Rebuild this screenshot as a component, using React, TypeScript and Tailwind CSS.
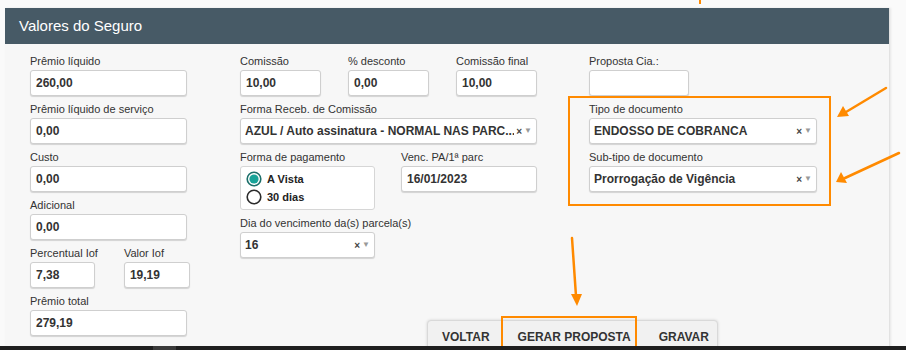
const font = { fontFamily: '"Liberation Sans", Arial, sans-serif' };

const Label = ({ children }: { children: React.ReactNode }) => (
  <div className="h-[14px] mb-[2px] text-[11px] leading-[14px] text-[#333] whitespace-nowrap">{children}</div>
);

const Input = ({ value, width }: { value?: string; width: string }) => (
  <div
    className={`${width} h-[26px] bg-white border border-[#cfcfcf] rounded-[3px] shadow-[0_1px_1px_rgba(0,0,0,0.15)] px-[5px] flex items-center text-[12px] font-bold text-[#333]`}
  >
    {value}
  </div>
);

const Select = ({ value, width }: { value: string; width: string }) => (
  <div
    className={`${width} h-[26px] bg-white border border-[#cfcfcf] rounded-[3px] shadow-[0_1px_1px_rgba(0,0,0,0.15)] pl-[4px] pr-[4px] flex items-center text-[12px] font-bold text-[#333]`}
  >
    <span className="flex-1 whitespace-nowrap overflow-hidden">{value}</span>
    <span className="text-[10px] font-bold text-[#444] ml-[2px]">×</span>
    <span className="text-[8px] text-[#999] ml-[2px]">▼</span>
  </div>
);

const Field = ({ label, children }: { label: string; children: React.ReactNode }) => (
  <div className="flex flex-col">
    <Label>{label}</Label>
    {children}
  </div>
);

const Radio = ({ checked, label }: { checked?: boolean; label: string }) => (
  <div className="flex items-center gap-[5px] h-[18px]">
    <svg width="16" height="16" viewBox="0 0 16 16">
      <circle cx="8" cy="8" r="6.8" fill="white" stroke={checked ? "#1c6f6a" : "#2b2b2b"} strokeWidth="1.6" />
      {checked && <circle cx="8" cy="8" r="4.6" fill="#17a398" />}
    </svg>
    <span className="text-[11px] font-bold text-[#222]">{label}</span>
  </div>
);

const Arrows = () => (
  <svg className="absolute inset-0 pointer-events-none" width="906" height="350">
    <g stroke="#ff8a00" strokeWidth="2.5" strokeLinecap="round">
      <line x1="886" y1="88" x2="846" y2="112" />
      <line x1="899" y1="153" x2="845" y2="178" />
      <line x1="572" y1="238" x2="576" y2="296" />
    </g>
    <g fill="#ff8a00">
      <polygon points="837,117 843,106 849,116" />
      <polygon points="836,182 841,172 847,183" />
      <polygon points="577,306 571,294 582,294" />
    </g>
    <rect x="699" y="0" width="2" height="4" fill="#ff8a00" />
  </svg>
);

export default function App() {
  return (
    <div className="relative w-[906px] h-[350px] bg-[#fafafa] flex flex-col overflow-hidden" style={font}>
      <div className="flex-1 overflow-hidden pt-[8px] pl-[5px]">
        <div className="w-[885px] bg-[#f7f7f7] border-r border-[#e2e2e2] shadow-[1px_0_2px_rgba(0,0,0,0.08)]">
          <div className="h-[36px] bg-[#475a66] flex items-center pl-[14px] text-white text-[15px]">
            Valores do Seguro
          </div>
          <div className="flex pl-[25px] pt-[10px] gap-[53px]">
            {/* coluna 1 */}
            <div className="flex flex-col gap-[6px] w-[157px]">
              <Field label="Prêmio líquido"><Input value="260,00" width="w-[157px]" /></Field>
              <Field label="Prêmio líquido de serviço"><Input value="0,00" width="w-[157px]" /></Field>
              <Field label="Custo"><Input value="0,00" width="w-[157px]" /></Field>
              <Field label="Adicional"><Input value="0,00" width="w-[157px]" /></Field>
              <div className="flex gap-[26px]">
                <Field label="Percentual Iof"><Input value="7,38" width="w-[65px]" /></Field>
                <Field label="Valor Iof"><Input value="19,19" width="w-[66px]" /></Field>
              </div>
              <Field label="Prêmio total"><Input value="279,19" width="w-[157px]" /></Field>
            </div>

            {/* colunas 2 e 3 */}
            <div className="flex flex-col">
              <div className="flex gap-[52px]">
                <div className="flex flex-col gap-[6px] w-[297px]">
                  <div className="flex gap-[27px]">
                    <Field label="Comissão"><Input value="10,00" width="w-[81px]" /></Field>
                    <Field label="% desconto"><Input value="0,00" width="w-[81px]" /></Field>
                    <Field label="Comissão final"><Input value="10,00" width="w-[81px]" /></Field>
                  </div>
                  <Field label="Forma Receb. de Comissão">
                    <Select value="AZUL / Auto assinatura - NORMAL NAS PARC..." width="w-[297px]" />
                  </Field>
                  <div className="flex gap-[26px]">
                    <Field label="Forma de pagamento">
                      <div className="w-[135px] h-[44px] bg-white border border-[#d6d6d6] rounded-[3px] pl-[5px] flex flex-col justify-center">
                        <Radio checked label="A Vista" />
                        <Radio label="30 dias" />
                      </div>
                    </Field>
                    <Field label="Venc. PA/1ª parc"><Input value="16/01/2023" width="w-[136px]" /></Field>
                  </div>
                  <Field label="Dia do vencimento da(s) parcela(s)">
                    <Select value="16" width="w-[135px]" />
                  </Field>
                </div>

                <div className="flex flex-col w-[228px]">
                  <Field label="Proposta Cia.:"><Input width="w-[100px]" /></Field>
                  <div className="-ml-[21px] w-[263px] border-2 border-[#ff8a00] pl-[19px] pt-[4px] pb-[12px] flex flex-col gap-[6px]">
                    <Field label="Tipo de documento"><Select value="ENDOSSO DE COBRANCA" width="w-[228px]" /></Field>
                    <Field label="Sub-tipo de documento"><Select value="Prorrogação de Vigência" width="w-[228px]" /></Field>
                  </div>
                </div>
              </div>

              <div className="ml-[187px] mt-[62px] w-[291px] h-[34px] bg-[#f1f1f1] border border-[#d9d9d9] rounded-t-[4px] shadow-[0_0_3px_rgba(0,0,0,0.15)] flex items-stretch text-[12px] font-bold text-[#333] whitespace-nowrap">
                <span className="px-[14px] flex items-center">VOLTAR</span>
                <span className="relative px-[14px] flex items-center">
                  GERAR PROPOSTA
                  <span className="absolute -left-[3px] -top-[5px] w-[136px] h-[40px] border-2 border-[#ff8a00]" />
                </span>
                <span className="px-[14px] flex items-center">GRAVAR</span>
              </div>
            </div>
          </div>
        </div>
      </div>
      <div className="h-[4px] bg-[#1f1f1f] flex">
        <div className="ml-[153px] w-[23px] bg-[#3a3a3a]" />
      </div>
      <Arrows />
    </div>
  );
}
